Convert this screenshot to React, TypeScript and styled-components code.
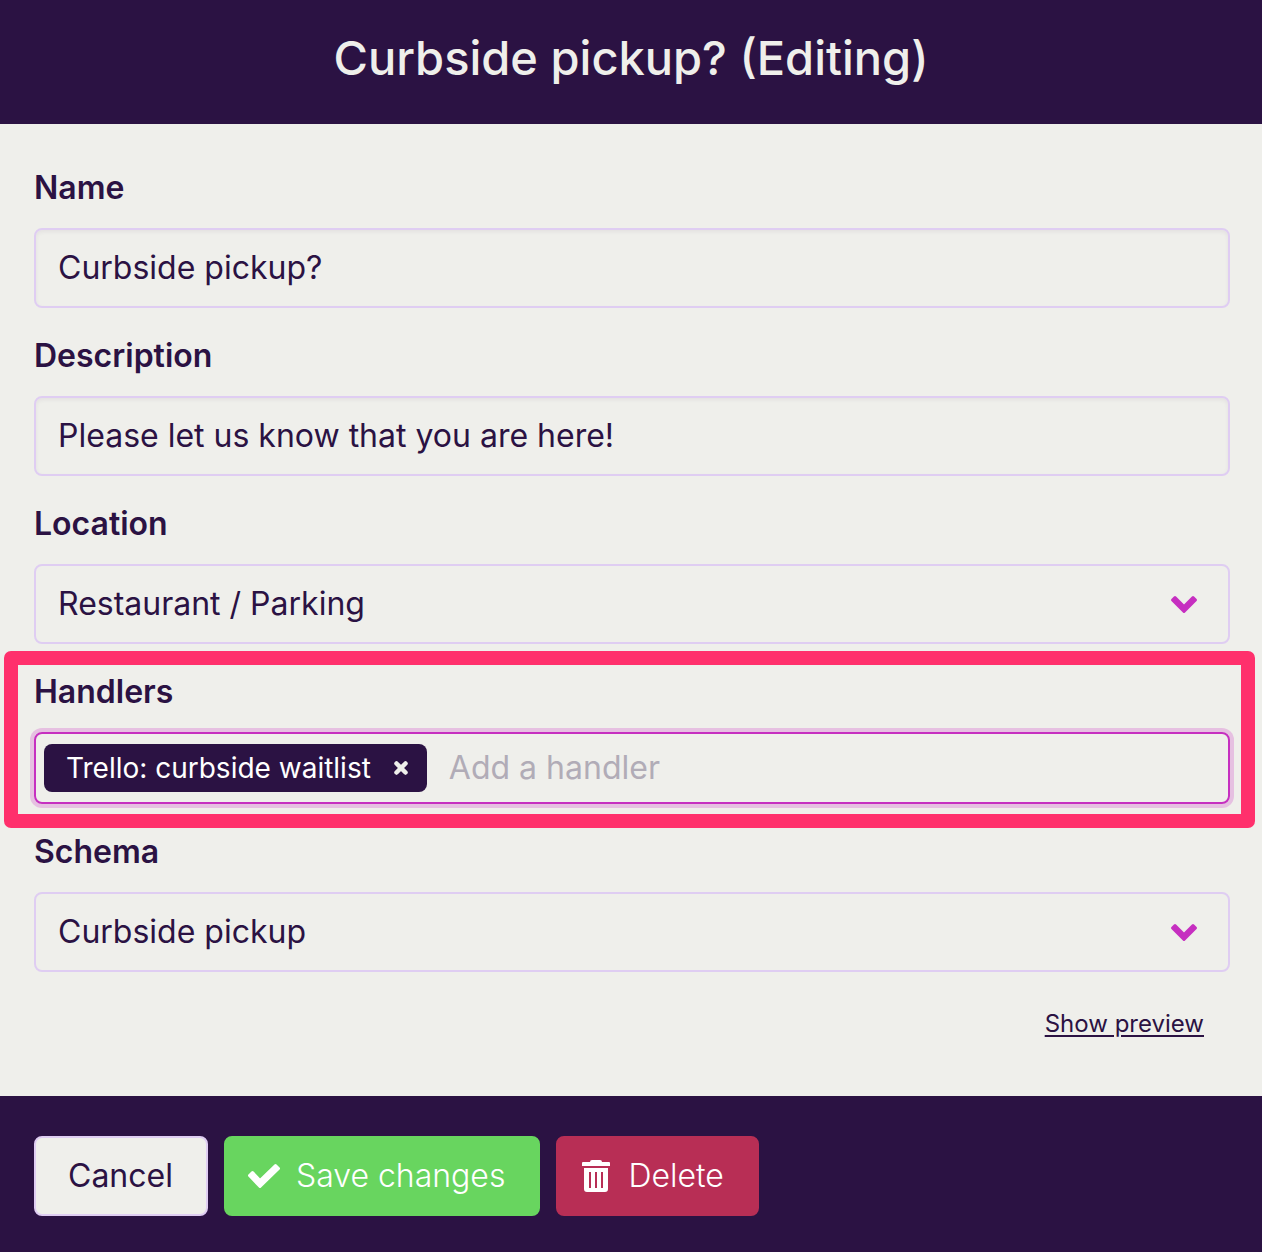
import React from "react";
import styled, { createGlobalStyle, css } from "styled-components";

const ink = "#2b1243";
const paper = "#efefeb";
const lilac = "#dfcdf2";
const magenta = "#c62fc0";

const GlobalStyle = createGlobalStyle`
  *, *::before, *::after { box-sizing: border-box; }
  body { margin: 0; background: ${ink}; }
  body, input, select, button { font-family: Inter, "Noto Sans", sans-serif; }
`;

const Panel = styled.form`
  display: flex;
  flex-direction: column;
  background: ${paper};
  color: ${ink};
`;

const Header = styled.header`
  padding: 26px 32px 34px;
  background: ${ink};
  color: ${paper};
  text-align: center;
`;

const Title = styled.h1`
  margin: 0;
  font-size: 47px;
  line-height: 64px;
  font-weight: 500;
`;

const Fields = styled.main`
  display: flex;
  flex-direction: column;
  gap: 24px;
  padding: 40px 32px 52px 34px;
`;

const Field = styled.div<{ $highlighted?: boolean }>`
  position: relative;
  display: flex;
  flex-direction: column;
  gap: 16px;
  ${(p) =>
    p.$highlighted &&
    css`
      &::after {
        content: "";
        position: absolute;
        inset: -17px -25px -24px -30px;
        border: 14px solid #ff306c;
        border-radius: 7px;
        pointer-events: none;
      }
    `}
`;

const Label = styled.label`
  font-size: 32px;
  line-height: 48px;
  font-weight: 600;
`;

const control = css`
  width: 100%;
  height: 80px;
  padding: 0 22px 2px;
  border: 2px solid ${lilac};
  border-radius: 8px;
  background: ${paper};
  color: ${ink};
  font-size: 32px;
  outline: none;
`;

const TextInput = styled.input`
  ${control}
  box-shadow: inset 0 2px 4px rgba(43, 18, 67, 0.06);
`;

const SelectWrap = styled.div`
  position: relative;
`;

const Select = styled.select`
  ${control}
  display: block;
  appearance: none;
`;

const Chevron = styled.svg`
  position: absolute;
  right: 32px;
  top: 30px;
  width: 28px;
  height: 20px;
  pointer-events: none;
`;

const TagBox = styled.div`
  display: flex;
  align-items: center;
  gap: 22px;
  height: 72px;
  padding: 0 8px;
  border: 2px solid ${magenta};
  border-radius: 8px;
  box-shadow: 0 0 0 4px #e6c0e1;
`;

const Tag = styled.span`
  display: flex;
  align-items: center;
  gap: 22px;
  height: 48px;
  padding: 0 18px 0 22px;
  border-radius: 8px;
  background: ${ink};
  color: #fff;
  font-size: 28px;
  white-space: nowrap;
`;

const RemoveButton = styled.button`
  display: flex;
  padding: 0;
  border: 0;
  background: none;
  color: ${paper};
`;

const TagInput = styled.input`
  flex: 1;
  min-width: 0;
  padding: 0 0 2px;
  border: 0;
  outline: 0;
  background: none;
  color: ${ink};
  font-size: 32px;
  &::placeholder {
    color: #b1acb7;
    opacity: 1;
  }
`;

const PreviewLink = styled.a`
  align-self: flex-end;
  margin: 8px 26px 0 0;
  color: ${ink};
  font-size: 24px;
  line-height: 40px;
  text-decoration-thickness: 2px;
  text-underline-offset: 3px;
`;

const Footer = styled.footer`
  display: flex;
  flex-wrap: wrap;
  gap: 16px;
  padding: 40px 34px 36px;
  background: ${ink};
`;

const Button = styled.button<{ $fill: string; $text?: string; $edge?: string }>`
  display: flex;
  align-items: center;
  gap: 16px;
  height: 80px;
  padding: 0 33px 2px ${(p) => (p.$edge ? 32 : 22)}px;
  border: 2px solid ${(p) => p.$edge ?? p.$fill};
  border-radius: 8px;
  background: ${(p) => p.$fill};
  color: ${(p) => p.$text ?? "#fff"};
  font-size: 32px;
  font-weight: ${(p) => (p.$edge ? 400 : 300)};
`;

const ButtonIcon = styled.svg`
  width: 32px;
  height: 32px;
  margin-top: 2px;
`;

const ChevronIcon = () => (
  <Chevron viewBox="0 0 28 20" aria-hidden="true">
    <path
      fill={magenta}
      stroke={magenta}
      strokeWidth="3"
      strokeLinejoin="round"
      d="M2.500 6L5 3.500L14 12.500L23 3.500L25.500 6L14 17.500Z"
    />
  </Chevron>
);

const TickIcon = () => (
  <ButtonIcon viewBox="0 0 32 32" aria-hidden="true">
    <path
      fill="currentColor"
      stroke="currentColor"
      strokeWidth="3"
      strokeLinejoin="round"
      d="M1.500 15.500L4.500 12.500L12 20.500L27.500 5.500L30.500 8.500L12 26.500Z"
    />
  </ButtonIcon>
);

const TrashIcon = () => (
  <ButtonIcon viewBox="0 0 32 32" aria-hidden="true">
    <path
      fill="currentColor"
      fillRule="evenodd"
      d="M10 2a2 2 0 0 1 2-2h8a2 2 0 0 1 2 2h7a1 1 0 0 1 1 1v3H2V3a1 1 0 0 1 1-1zM4 8h24v21a3 3 0 0 1-3 3H7a3 3 0 0 1-3-3zM9 12v16h2V12zM15 12v16h2V12zM21 12v16h2V12z"
    />
  </ButtonIcon>
);

const CrossIcon = () => (
  <svg width="16" height="16" viewBox="0 0 16 16" aria-hidden="true">
    <path d="M3.500 3.500l9 9M12.500 3.500l-9 9" stroke="currentColor" strokeWidth="4.500" strokeLinecap="round" />
  </svg>
);

export default function App() {
  return (
    <>
      <GlobalStyle />
      <Panel onSubmit={(e) => e.preventDefault()}>
        <Header>
          <Title>Curbside pickup? (Editing)</Title>
        </Header>
        <Fields>
          <Field>
            <Label htmlFor="name">Name</Label>
            <TextInput id="name" defaultValue="Curbside pickup?" />
          </Field>
          <Field>
            <Label htmlFor="description">Description</Label>
            <TextInput id="description" defaultValue="Please let us know that you are here!" />
          </Field>
          <Field>
            <Label htmlFor="location">Location</Label>
            <SelectWrap>
              <Select id="location">
                <option>Restaurant / Parking</option>
              </Select>
              <ChevronIcon />
            </SelectWrap>
          </Field>
          <Field $highlighted>
            <Label htmlFor="handlers">Handlers</Label>
            <TagBox>
              <Tag>
                Trello: curbside waitlist
                <RemoveButton type="button" aria-label="Remove">
                  <CrossIcon />
                </RemoveButton>
              </Tag>
              <TagInput id="handlers" placeholder="Add a handler" />
            </TagBox>
          </Field>
          <Field>
            <Label htmlFor="schema">Schema</Label>
            <SelectWrap>
              <Select id="schema">
                <option>Curbside pickup</option>
              </Select>
              <ChevronIcon />
            </SelectWrap>
          </Field>
          <PreviewLink href="#preview">Show preview</PreviewLink>
        </Fields>
        <Footer>
          <Button type="button" $fill={paper} $text={ink} $edge={lilac}>
            Cancel
          </Button>
          <Button type="submit" $fill="#68d55f">
            <TickIcon />
            Save changes
          </Button>
          <Button type="button" $fill="#b82e55">
            <TrashIcon />
            Delete
          </Button>
        </Footer>
      </Panel>
    </>
  );
}
